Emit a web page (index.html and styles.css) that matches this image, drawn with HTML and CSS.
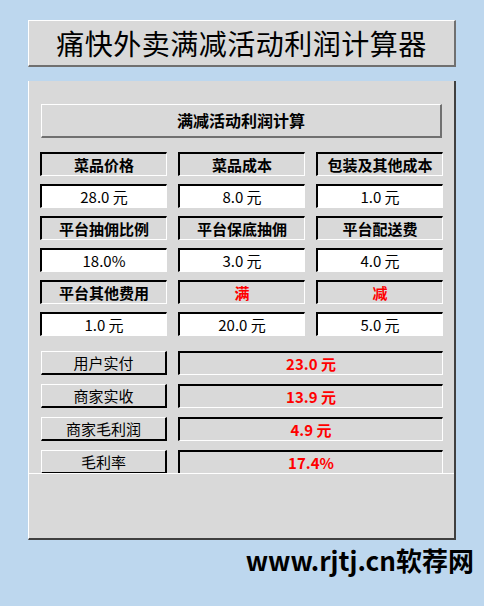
FILE: index.html
```html
<!DOCTYPE html>
<html lang="zh">
<head>
<meta charset="utf-8">
<title>痛快外卖满减活动利润计算器</title>
<link rel="stylesheet" href="styles.css">
</head>
<body>
<div class="page">
  <div class="title">痛快外卖满减活动利润计算器</div>
  <div class="panel">
    <div class="subtitle">满减活动利润计算</div>
    <div class="grid">
      <div class="cell label">菜品价格</div>
      <div class="cell label">菜品成本</div>
      <div class="cell label">包装及其他成本</div>
      <div class="cell input">28.0 元</div>
      <div class="cell input">8.0 元</div>
      <div class="cell input">1.0 元</div>
      <div class="cell label">平台抽佣比例</div>
      <div class="cell label">平台保底抽佣</div>
      <div class="cell label">平台配送费</div>
      <div class="cell input">18.0%</div>
      <div class="cell input">3.0 元</div>
      <div class="cell input">4.0 元</div>
      <div class="cell label">平台其他费用</div>
      <div class="cell label red">满</div>
      <div class="cell label red">减</div>
      <div class="cell input">1.0 元</div>
      <div class="cell input">20.0 元</div>
      <div class="cell input">5.0 元</div>
    </div>
    <div class="results">
      <div class="rlabel">用户实付</div>
      <div class="rvalue">23.0 元</div>
      <div class="rlabel">商家实收</div>
      <div class="rvalue">13.9 元</div>
      <div class="rlabel">商家毛利润</div>
      <div class="rvalue">4.9 元</div>
      <div class="rlabel">毛利率</div>
      <div class="rvalue">17.4%</div>
    </div>
    <div class="divider"></div>
  </div>
  <div class="watermark">www.rjtj.cn软荐网</div>
</div>
</body>
</html>
```

FILE: styles.css
```css
html, body {
  margin: 0;
  padding: 0;
  background: #bdd7ee;
}
body {
  font-family: "Noto Sans CJK SC", "Noto Sans", sans-serif;
  color: #000;
}
.page {
  width: 484px;
  height: 606px;
  padding-top: 20px;
  box-sizing: border-box;
}
.title {
  margin-left: 28px;
  width: 428px;
  height: 47px;
  box-sizing: border-box;
  background: #d9d9d9;
  border-top: 1px solid #fff;
  border-left: 1px solid #fff;
  border-right: 2px solid #707070;
  border-bottom: 2px solid #707070;
  font-size: 28px;
  line-height: 44px;
  text-align: center;
  letter-spacing: 0.5px;
}
.panel {
  margin-top: 14px;
  margin-left: 28px;
  width: 428px;
  height: 459px;
  box-sizing: border-box;
  background: #d9d9d9;
  border-left: 1px solid #fff;
  border-right: 2px solid #404040;
  border-bottom: 2px solid #404040;
  padding-top: 23px;
}
.subtitle {
  margin-left: 12px;
  width: 401px;
  height: 34px;
  box-sizing: border-box;
  border-top: 1px solid #fff;
  border-left: 1px solid #fff;
  border-right: 2px solid #707070;
  border-bottom: 2px solid #707070;
  font-size: 16px;
  font-weight: bold;
  line-height: 31px;
  text-align: center;
}
.grid {
  margin-top: 14px;
  margin-left: 11px;
  display: grid;
  grid-template-columns: 127px 127px 127px;
  grid-auto-rows: 24px;
  column-gap: 11px;
  row-gap: 8px;
}
.cell {
  box-sizing: border-box;
  border-top: 2px solid #000;
  border-left: 2px solid #000;
  border-right: 1px solid #fff;
  border-bottom: 1px solid #fff;
  font-size: 15px;
  line-height: 21px;
  text-align: center;
}
.label {
  font-weight: bold;
}
.input {
  background: #fff;
}
.red {
  color: #ff0000;
}
.results {
  margin-top: 15px;
  margin-left: 12px;
  height: 122px;
  overflow: hidden;
  display: grid;
  grid-template-columns: 126px 265px;
  grid-auto-rows: 24px;
  column-gap: 11px;
  row-gap: 9px;
}
.rlabel {
  box-sizing: border-box;
  border-top: 1px solid #fff;
  border-left: 1px solid #fff;
  border-right: 2px solid #000;
  border-bottom: 2px solid #000;
  font-size: 15px;
  line-height: 21px;
  text-align: center;
}
.rvalue {
  box-sizing: border-box;
  border-top: 2px solid #000;
  border-left: 2px solid #000;
  border-right: 1px solid #fff;
  border-bottom: 1px solid #fff;
  font-size: 15px;
  font-weight: bold;
  line-height: 21px;
  text-align: center;
  color: #ff0000;
}
.divider {
  border-top: 1px solid #fff;
}
.watermark {
  margin-top: 2px;
  padding-right: 10px;
  text-align: right;
  font-size: 26px;
  font-weight: bold;
  line-height: 36px;
  color: #000;
}
```
